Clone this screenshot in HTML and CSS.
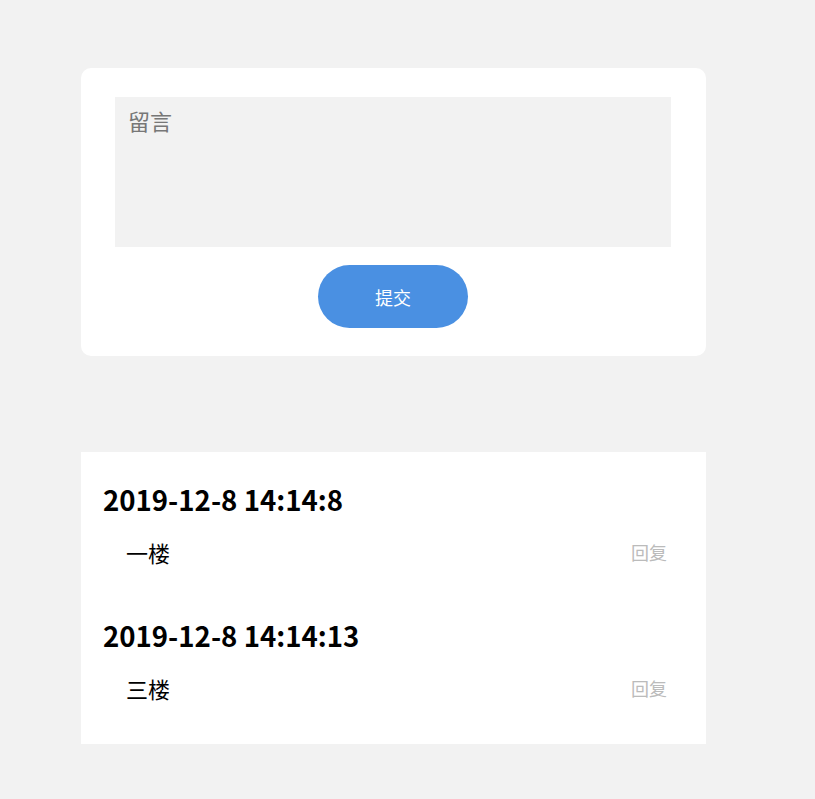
FILE: index.html
```html
<!DOCTYPE html>
<html lang="zh">
<head>
<meta charset="utf-8">
<link rel="stylesheet" href="styles.css">
</head>
<body>
<div class="page">
  <section class="form-card">
    <textarea class="message" placeholder="留言"></textarea>
    <button class="submit">提交</button>
  </section>
  <section class="list-card">
    <div class="entry">
      <h3 class="time">2019-12-8 14:14:8</h3>
      <div class="row"><span class="text">一楼</span><span class="reply">回复</span></div>
    </div>
    <div class="entry">
      <h3 class="time">2019-12-8 14:14:13</h3>
      <div class="row"><span class="text">三楼</span><span class="reply">回复</span></div>
    </div>
  </section>
</div>
</body>
</html>
```
FILE: styles.css
```css
html, body {
  margin: 0;
  padding: 0;
  background: #f2f2f2;
  font-family: "Noto Sans CJK SC", "Noto Sans", sans-serif;
}
.page {
  padding: 68px 0 40px 81px;
  display: flex;
  flex-direction: column;
  gap: 96px;
  width: 625px;
}
.form-card {
  background: #fff;
  border-radius: 10px;
  padding: 29px 35px 28px 34px;
  display: flex;
  flex-direction: column;
  align-items: center;
  gap: 18px;
}
.message {
  width: 556px;
  height: 150px;
  box-sizing: border-box;
  border: none;
  outline: none;
  background: #f2f2f2;
  resize: none;
  padding: 8px 13px;
  font-family: "Noto Sans CJK SC", sans-serif;
  font-size: 22px;
  line-height: 30px;
  display: block;
}
.message::placeholder {
  color: #777;
}
.submit {
  width: 150px;
  height: 63px;
  border: none;
  border-radius: 32px;
  background: #4a90e2;
  color: #fff;
  font-family: "Noto Sans CJK SC", sans-serif;
  font-size: 18px;
}
.list-card {
  background: #fff;
  padding: 31px 39px 41px 22px;
  display: flex;
  flex-direction: column;
  gap: 52px;
}
.entry {
  display: flex;
  flex-direction: column;
  gap: 22px;
}
.time {
  margin: 0;
  font-size: 27.6px;
  line-height: 32px;
  font-weight: 700;
  color: #000;
}
.row {
  display: flex;
  justify-content: space-between;
  align-items: center;
  height: 30px;
  padding-left: 23px;
}
.text {
  font-size: 22px;
  color: #000;
}
.reply {
  font-size: 18px;
  color: #bbb;
}
```
